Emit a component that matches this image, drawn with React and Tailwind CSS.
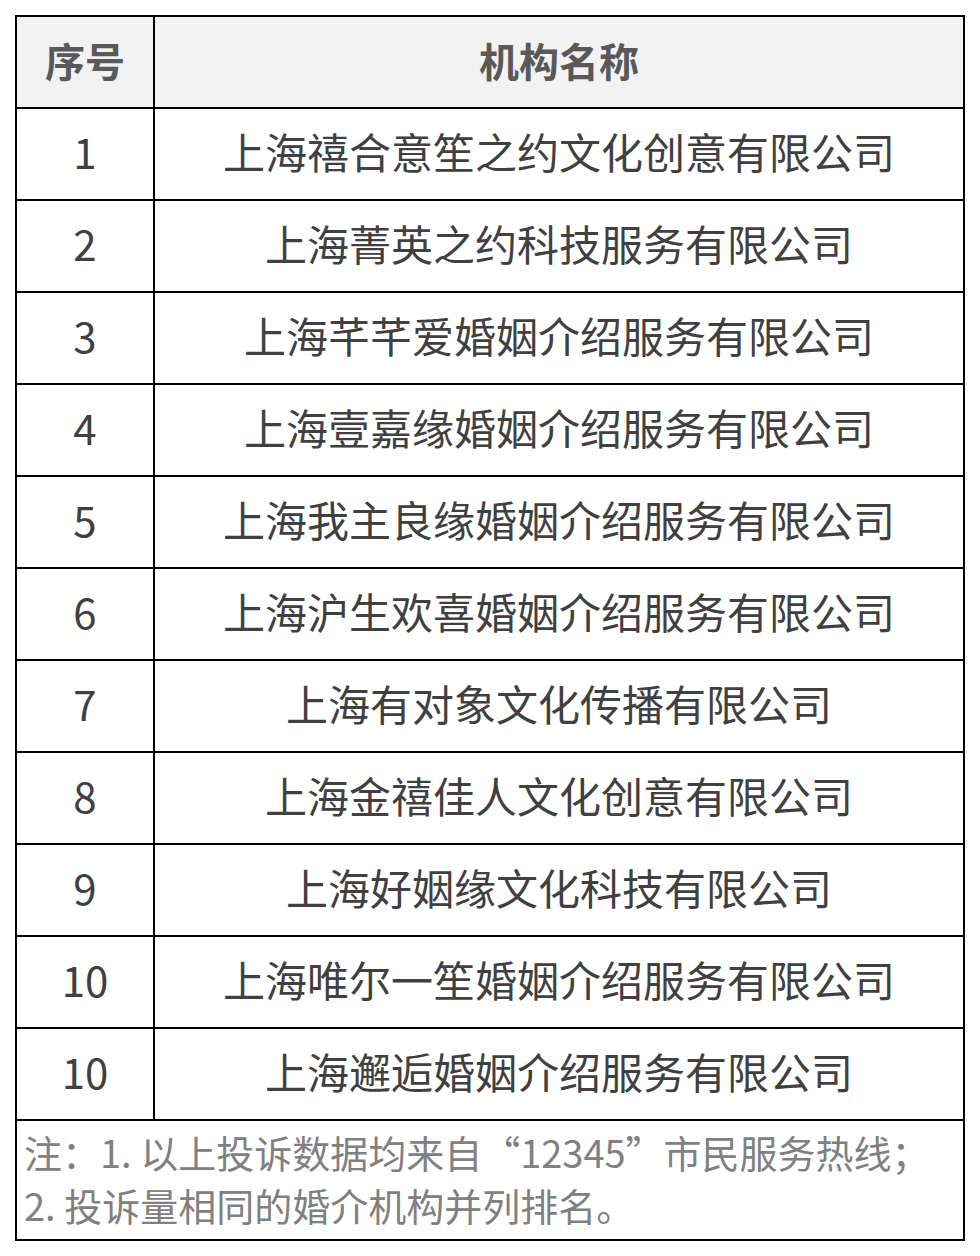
const rows = [
  ["1", "上海禧合意笙之约文化创意有限公司"],
  ["2", "上海菁英之约科技服务有限公司"],
  ["3", "上海芊芊爱婚姻介绍服务有限公司"],
  ["4", "上海壹嘉缘婚姻介绍服务有限公司"],
  ["5", "上海我主良缘婚姻介绍服务有限公司"],
  ["6", "上海沪生欢喜婚姻介绍服务有限公司"],
  ["7", "上海有对象文化传播有限公司"],
  ["8", "上海金禧佳人文化创意有限公司"],
  ["9", "上海好姻缘文化科技有限公司"],
  ["10", "上海唯尔一笙婚姻介绍服务有限公司"],
  ["10", "上海邂逅婚姻介绍服务有限公司"],
];

export default function App() {
  return (
    <div
      className="w-[980px] h-[1256px] bg-white pt-[15px] pl-[15px]"
      style={{ fontFamily: '"Noto Sans CJK SC", "Noto Sans", sans-serif' }}
    >
      <table className="w-[950px] border-collapse table-fixed">
        <colgroup>
          <col className="w-[138px]" />
          <col />
        </colgroup>
        <thead>
          <tr className="h-[92px] bg-[#f2f2f2]">
            <th className="border-2 border-black pb-[4px] text-[40px] font-bold text-[#595959]">序号</th>
            <th className="border-2 border-black pb-[4px] text-[40px] font-bold text-[#595959]">机构名称</th>
          </tr>
        </thead>
        <tbody>
          {rows.map(([n, name], i) => (
            <tr key={i} className="h-[92px]">
              <td className="border-2 border-black pb-[7px] text-center text-[42px] leading-none text-[#404040]">{n}</td>
              <td className="border-2 border-black pb-[7px] text-center text-[42px] leading-none text-[#404040]">{name}</td>
            </tr>
          ))}
          <tr>
            <td colSpan={2} className="border-2 border-black px-[7px] pt-[4px] pb-[8px] text-[38px] leading-[53px] text-[#808080]">
              <div>注：1. 以上投诉数据均来自“12345”市民服务热线；</div>
              <div>2. 投诉量相同的婚介机构并列排名。</div>
            </td>
          </tr>
        </tbody>
      </table>
    </div>
  );
}
